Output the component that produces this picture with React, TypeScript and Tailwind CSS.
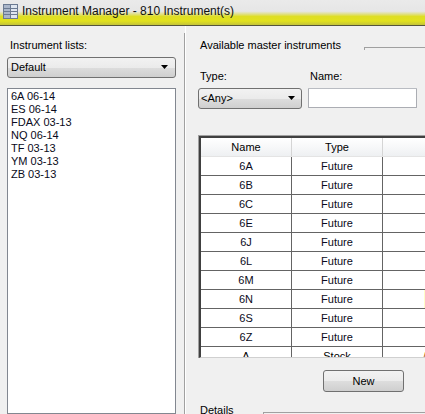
import React from "react";

const rows = ["6A", "6B", "6C", "6E", "6J", "6L", "6M", "6N", "6S", "6Z"];
const lists = ["6A 06-14", "ES 06-14", "FDAX 03-13", "NQ 06-14", "TF 03-13", "YM 03-13", "ZB 03-13"];

function Arrow() {
  return (
    <svg width="8" height="5" viewBox="0 0 8 5" className="shrink-0">
      <path d="M0 0 H7 L3.5 4 Z" fill="#000" />
    </svg>
  );
}

function AppIcon() {
  return (
    <svg width="15" height="15" viewBox="0 0 15 15" className="shrink-0">
      <rect x="0.5" y="0.5" width="14" height="14" fill="#dfe6f0" stroke="#6b7a92" />
      <rect x="1" y="1" width="6" height="13" fill="#aab6ca" />
      <path d="M1 4.5 H14 M1 7.5 H14 M1 10.5 H14" stroke="#6b7a92" strokeWidth="1" />
      <path d="M7.5 1 V14" stroke="#6b7a92" strokeWidth="1" />
    </svg>
  );
}

export default function App() {
  return (
    <div
      className="w-[425px] h-[414px] overflow-hidden bg-[#f0f0f0] flex flex-col text-[11px] text-black"
      style={{ fontFamily: '"Liberation Sans", Arial, sans-serif' }}
    >
      {/* Title bar */}
      <div className="h-[26px] shrink-0 flex items-start pt-[4px] pl-[3px] gap-[4px] border-b border-[#55553a] bg-[linear-gradient(to_bottom,#eaeaea_0%,#e6e6e6_45%,#e0e08a_56%,#dede24_66%,#e2e21c_84%,#c4c43a_100%)]">
        <AppIcon />
        <span className="text-[12px] leading-[15px] text-[#111]">Instrument Manager - 810 Instrument(s)</span>
      </div>

      {/* Body */}
      <div className="flex flex-1 min-h-0">
        {/* Left panel */}
        <div className="w-[184px] shrink-0 pl-[7px] pr-[8px] pt-[13px] flex flex-col">
          <div className="pl-[3px] leading-[13px]">Instrument lists:</div>
          <div className="mt-[5px] h-[21px] rounded-[3px] border border-[#707070] bg-[linear-gradient(to_bottom,#f2f2f2_0%,#ebebeb_50%,#dddddd_51%,#cfcfcf_100%)] flex items-center pl-[3px] pr-[6px] justify-between">
            <span>Default</span>
            <Arrow />
          </div>
          <div className="mt-[10px] flex-1 border border-[#828790] bg-white pt-[1px] pl-[3px] flex flex-col">
            {lists.map((l) => (
              <div key={l} className="leading-[13px] text-[#0a0a20]">{l}</div>
            ))}
          </div>
        </div>

        {/* Separator */}
        <div className="w-px mt-[7px] bg-[#a0a0a0] shrink-0" />

        {/* Right panel */}
        <div className="flex-1 min-w-0 pl-[12px] pt-[13px] flex flex-col border-l border-white overflow-hidden">
          <div className="flex items-start">
            <span className="pl-[2px] leading-[13px] whitespace-nowrap">Available master instruments</span>
            <div className="ml-[23px] mt-[8px] flex-1 h-[3px] border-t border-l border-[#a0a0a0]" />
          </div>

          <div className="mt-[18px] flex gap-[6px]">
            <div className="w-[104px] flex flex-col">
              <span className="pl-[2px] leading-[13px]">Type:</span>
              <div className="mt-[5px] h-[21px] rounded-[3px] border border-[#707070] bg-[linear-gradient(to_bottom,#f2f2f2_0%,#ebebeb_50%,#dddddd_51%,#cfcfcf_100%)] flex items-center pl-[2px] pr-[5px] justify-between">
                <span>&lt;Any&gt;</span>
                <Arrow />
              </div>
            </div>
            <div className="w-[109px] flex flex-col">
              <span className="pl-[2px] leading-[13px]">Name:</span>
              <div className="mt-[5px] h-[20px] border border-[#abadb3] border-t-[#b9bcc2] bg-white rounded-[1px]" />
            </div>
          </div>

          {/* Table */}
          <div className="mt-[26px] w-[260px] h-[223px] border-l border-t border-[#a0a0a0] shrink-0">
            <div className="h-full border-l-2 border-t-2 border-[#404040] bg-white overflow-hidden border-b border-b-[#d0d0d0]">
              <div className="flex h-[19px] bg-[linear-gradient(to_bottom,#ffffff_0%,#f7f8f9_50%,#eef0f2_100%)] border-b border-[#e4e4e4]">
                <div className="w-[91px] text-center leading-[19px] border-r border-[#d5d5d5]">Name</div>
                <div className="w-[91px] text-center leading-[19px] border-r border-[#d5d5d5]">Type</div>
                <div className="flex-1" />
              </div>
              {rows.map((r) => (
                <div key={r} className="flex h-[19px] border-b border-[#646464]">
                  <div className="w-[91px] text-center leading-[18px] text-[#0a0a20] border-r border-[#646464]">{r}</div>
                  <div className="w-[91px] text-center leading-[18px] text-[#0a0a20] border-r border-[#646464]">Future</div>
                  <div className="flex-1 flex">
                    <div className="w-[41px]" />
                    {r === "6N" && <div className="w-[6px] bg-[#ffffc8]" />}
                  </div>
                </div>
              ))}
              <div className="flex h-[19px]">
                <div className="w-[91px] text-center leading-[18px] border-r border-[#646464]">A</div>
                <div className="w-[91px] text-center leading-[18px] border-r border-[#646464]">Stock</div>
                <div className="flex-1 pl-[40px] leading-[18px] text-[#a05000]">/</div>
              </div>
            </div>
          </div>

          <div className="mt-[12px] ml-[125px] w-[81px] h-[22px] shrink-0 rounded-[3px] border border-[#707070] bg-[linear-gradient(to_bottom,#f2f2f2_0%,#ebebeb_50%,#dddddd_51%,#cfcfcf_100%)] flex items-center justify-center">
            New
          </div>

          <div className="mt-[12px] flex items-start">
            <span className="pl-[2px] leading-[13px]">Details</span>
            <div className="ml-[29px] mt-[8px] flex-1 h-[3px] border-t border-l border-[#a0a0a0]" />
          </div>
        </div>
      </div>
    </div>
  );
}
